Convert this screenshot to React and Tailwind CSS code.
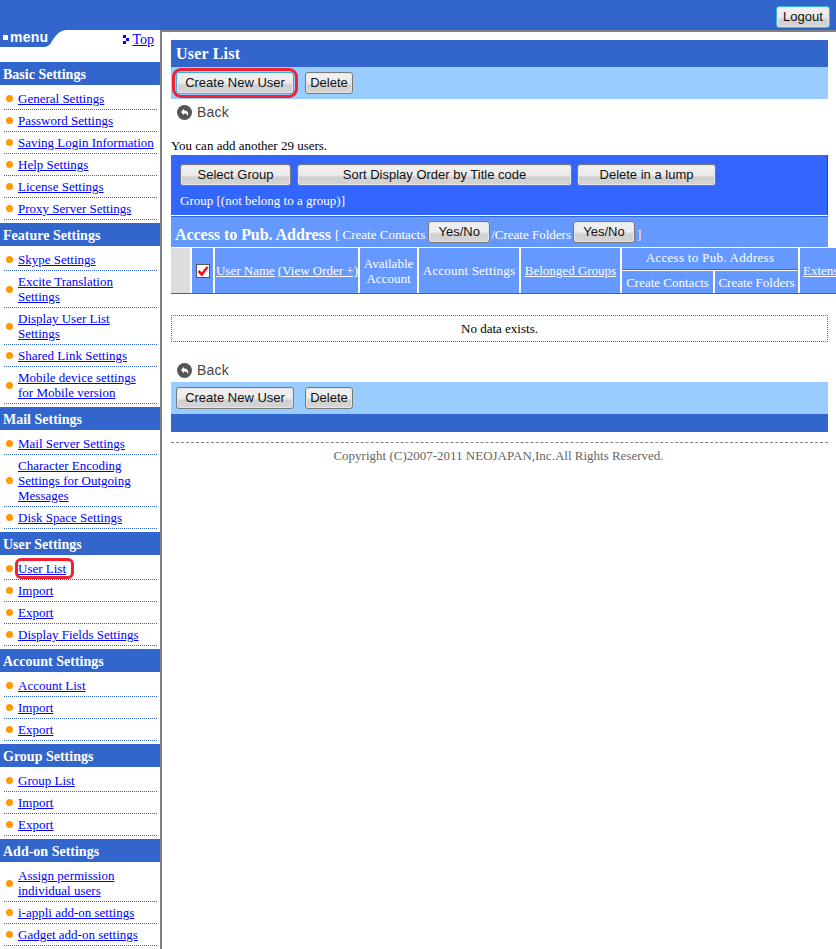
import React from 'react';

const menu = [
  { title: 'Basic Settings', items: ['General Settings', 'Password Settings', 'Saving Login Information', 'Help Settings', 'License Settings', 'Proxy Server Settings'] },
  { title: 'Feature Settings', items: ['Skype Settings', ['Excite Translation', 'Settings'], ['Display User List', 'Settings'], 'Shared Link Settings', ['Mobile device settings', 'for Mobile version']] },
  { title: 'Mail Settings', items: ['Mail Server Settings', ['Character Encoding', 'Settings for Outgoing', 'Messages'], 'Disk Space Settings'] },
  { title: 'User Settings', items: ['User List', 'Import', 'Export', 'Display Fields Settings'] },
  { title: 'Account Settings', items: ['Account List', 'Import', 'Export'] },
  { title: 'Group Settings', items: ['Group List', 'Import', 'Export'] },
  { title: 'Add-on Settings', items: [['Assign permission', 'individual users'], 'i-appli add-on settings', 'Gadget add-on settings'] },
];

function Btn({ children, className = '', focus }) {
  return (
    <button
      className={`h-[22px] pb-[2px] rounded-[3px] border text-[13px] leading-none text-[#111] shadow-[inset_0_0_0_1px_#e6e6e6] bg-[linear-gradient(#f0f0f0_0%,#ececec_50%,#d0d0d0_62%,#d4d4d4_100%)] ${focus ? 'border-[#35b4d8]' : 'border-[#7a7a7a]'} ${className}`}
      style={{ fontFamily: '"Liberation Sans", Arial, sans-serif' }}
    >
      {children}
    </button>
  );
}

function BackLink() {
  return (
    <div className="flex items-center h-[16px] pl-[6px] gap-[5px]">
      <svg width="15" height="15" viewBox="0 0 15 15">
        <circle cx="7.5" cy="7.5" r="7.5" fill="#555" />
        <path d="M4 7 L7 3.8 L7 5.6 C10 5.4 12 7.5 11 11 C10.3 9 9 8.3 7 8.4 L7 10.2 Z" fill="#fff" />
      </svg>
      <span className="text-[14px] text-[#444] tracking-[0.2px]" style={{ fontFamily: '"Liberation Sans", Arial, sans-serif' }}>Back</span>
    </div>
  );
}

function MenuItem({ item }) {
  const lines = Array.isArray(item) ? item : [item];
  const active = item === 'User List';
  return (
    <li className="flex items-center min-h-[22px] ml-[4px] mr-[3px] pl-[2px] border-b border-dotted border-[#3366cc]">
      <span className="w-[7px] h-[7px] rounded-full bg-[#ff9900] shrink-0" />
      <a href="#" className={`ml-[5px] text-[13px] leading-[15px] text-[#0000ff] underline whitespace-nowrap ${active ? 'pr-[5px] outline-[3px] outline-[#ee2233] rounded-[3px]' : 'py-[3px]'}`}>
        {lines.map((l, i) => <div key={i}>{l}</div>)}
      </a>
    </li>
  );
}

function Sidebar() {
  return (
    <aside className="w-[162px] shrink-0 border-r-2 border-[#808080]">
      <div className="h-[32px] flex items-start justify-between pr-[6px]">
        <div className="relative w-[66px] h-[17px]">
          <svg className="absolute inset-0" width="66" height="17" viewBox="0 0 66 17">
            <path d="M0 0 H66 C58 1 55 7 52 11 C50 15 48 17 42 17 H0 Z" fill="#3366cc" />
            <rect x="3" y="5" width="5" height="5" fill="#fff" />
          </svg>
          <span className="absolute left-[10px] top-0 text-[14px] leading-[15px] font-bold text-white tracking-[0.2px]" style={{ fontFamily: '"Liberation Sans", Arial, sans-serif' }}>menu</span>
        </div>
        <div className="flex items-center gap-[3px] mt-[1px]">
          <svg width="6" height="9" viewBox="0 0 6 9">
            <rect x="0" y="0" width="3" height="3" fill="#0000ff" />
            <rect x="3" y="3" width="3" height="3" fill="#0000ff" />
            <rect x="0" y="6" width="3" height="3" fill="#0000ff" />
          </svg>
          <a href="#" className="text-[14px] leading-[17px] text-[#0000ff] underline">Top</a>
        </div>
      </div>
      {menu.map((s) => (
        <section key={s.title}>
          <h2 className="h-[23px] bg-[#3366cc] text-white font-bold text-[14px] leading-[25px] pl-[3px]">{s.title}</h2>
          <ul className="pt-[3px] pb-[3px]">
            {s.items.map((it, i) => <MenuItem key={i} item={it} />)}
          </ul>
        </section>
      ))}
    </aside>
  );
}

const th = 'bg-[#6699ff] text-white text-[13px] leading-[15px] flex items-center justify-center text-center whitespace-nowrap';

function UserTable() {
  return (
    <div className="w-[700px] grid grid-cols-[19px_21px_143px_57px_100px_99px_91px_83px_60px] grid-rows-[22px_22px] gap-x-[2px] gap-y-px bg-white border-b border-[#3366cc]">
      <div className="row-span-2 bg-[#dddddd]" />
      <div className={`row-span-2 ${th}`}>
        <svg width="14" height="14" viewBox="0 0 14 14">
          <rect x="0.5" y="0.5" width="13" height="13" fill="#fff" stroke="#555" />
          <path d="M2.5 7 L5.8 10.5 L11.5 3" fill="none" stroke="#ee1122" strokeWidth="2.6" />
        </svg>
      </div>
      <div className={`row-span-2 ${th} gap-[3px] pl-px`}><span className="underline">User Name</span><span className="underline">(View Order +)</span></div>
      <div className={`row-span-2 ${th}`}>Available<br />Account</div>
      <div className={`row-span-2 ${th} tracking-[0.2px]`}>Account Settings</div>
      <div className={`row-span-2 ${th} underline`}>Belonged Groups</div>
      <div className={`col-span-2 ${th} border-b border-[#3366cc] tracking-[0.3px] pb-[2px]`}>Access to Pub. Address</div>
      <div className={`row-span-2 ${th} justify-start pl-[3px] underline`}>Extension</div>
      <div className={th}>Create Contacts</div>
      <div className={th}>Create Folders</div>
    </div>
  );
}

export default function App() {
  return (
    <div className="w-[836px] h-[949px] overflow-hidden bg-white" style={{ fontFamily: '"Liberation Serif", "Times New Roman", serif' }}>
      <header className="h-[30px] bg-[#3366cc] flex justify-end items-start pt-[6px] pr-[6px]">
        <Btn focus className="w-[54px] h-[20px]">Logout</Btn>
      </header>
      <div className="flex">
        <Sidebar />
        <main className="w-[674px] border-t-2 border-[#808080] pl-[9px] pt-[8px] shrink-0">
          <div className="w-[657px]">
            <h1 className="h-[27px] bg-[#3366cc] text-white font-bold text-[16px] leading-[28px] pl-[5px] tracking-[0.2px]">User List</h1>
            <div className="h-[32px] bg-[#99ccff] flex items-center pl-[5px] gap-[11px]">
              <div className="rounded-[5px] outline-[3px] outline-offset-1 outline-[#ee2233] flex">
                <Btn focus className="w-[118px]">Create New User</Btn>
              </div>
              <Btn className="w-[48px]">Delete</Btn>
            </div>
            <div className="pt-[5px]"><BackLink /></div>
            <p className="mt-[18px] text-[13px] leading-[15px] text-black">You can add another 29 users.</p>
            <div className="mt-[2px] h-[60px] bg-[#3366ff] border-r border-[#1a3fcc] px-[9px] pt-[9px]">
              <div className="flex gap-[6px]">
                <Btn className="w-[111px]">Select Group</Btn>
                <Btn className="w-[275px]">Sort Display Order by Title code</Btn>
                <Btn className="w-[139px] -ml-px">Delete in a lump</Btn>
              </div>
              <p className="mt-[7px] text-white text-[13px] leading-[15px]">Group [(not belong to a group)]</p>
            </div>
            <div className="h-px bg-white" />
            <div className="h-px bg-[#3366cc]" />
            <div className="h-[30px] bg-[#6699ff] flex items-center pl-[4px] text-white text-[13px] whitespace-nowrap">
              <span className="font-bold text-[16px] mt-[6px] tracking-[-0.05px]">Access to Pub. Address</span>
              <span className="ml-[4px] mt-[6px]">[ Create Contacts</span>
              <Btn className="w-[62px] h-[21px] ml-[3px]">Yes/No</Btn>
              <span className="ml-[1px] mt-[6px]">/Create Folders</span>
              <Btn className="w-[62px] h-[21px] ml-[2px]">Yes/No</Btn>
              <span className="ml-[2px] mt-[6px]">]</span>
            </div>
            <div className="h-px bg-white" />
            <UserTable />
            <div className="mt-[21px] h-[27px] border border-dotted border-[#666] flex items-center justify-center text-[13px] text-black">No data exists.</div>
            <div className="pt-[20px] pb-[4px]"><BackLink /></div>
            <div className="h-[32px] bg-[#99ccff] flex items-center pl-[5px] gap-[11px]">
              <Btn className="w-[118px]">Create New User</Btn>
              <Btn className="w-[48px]">Delete</Btn>
            </div>
            <div className="h-[18px] bg-[#3366cc]" />
            <div className="mt-[10px] border-t border-dashed border-[#808080]" />
            <p className="mt-[5px] pr-[2px] text-center text-[13px] leading-[15px] text-[#666]">Copyright (C)2007-2011 NEOJAPAN,Inc.All Rights Reserved.</p>
          </div>
        </main>
      </div>
    </div>
  );
}
